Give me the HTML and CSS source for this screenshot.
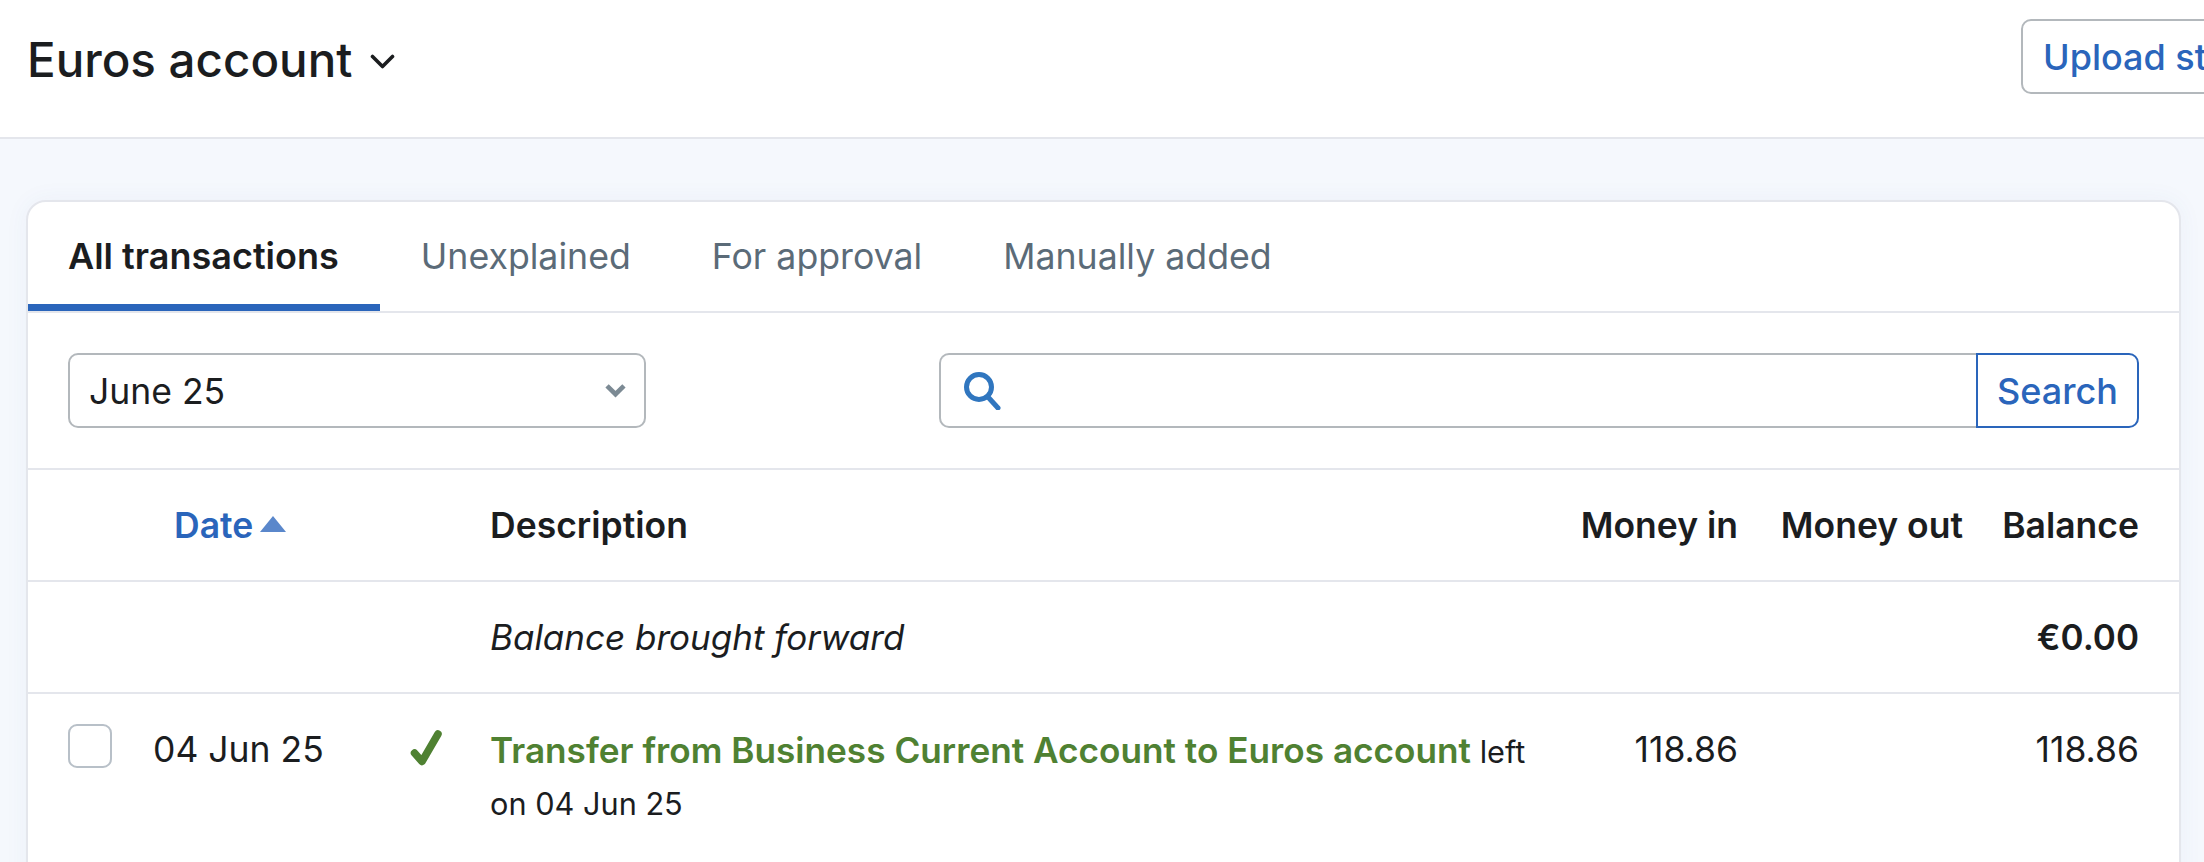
FILE: index.html
```html
<!DOCTYPE html>
<html lang="en">
<head>
<meta charset="utf-8">
<title>Euros account</title>
<link rel="stylesheet" href="styles.css">
</head>
<body>
<header class="topbar">
  <div class="title-wrap">
    <h1 class="title">Euros account</h1>
    <svg class="title-chev" viewBox="0 0 25 15" aria-hidden="true"><path d="M2.5 2.5l10 10 10-10" fill="none" stroke="#1b1d1f" stroke-width="3.6" stroke-linecap="round" stroke-linejoin="round"/></svg>
  </div>
  <a class="upload">Upload statement</a>
</header>
<main class="page">
  <section class="card">
    <nav class="tabs">
      <a class="tab tab-active">All transactions</a>
      <a class="tab">Unexplained</a>
      <a class="tab">For approval</a>
      <a class="tab">Manually added</a>
    </nav>
    <div class="filters">
      <div class="select">
        <span class="select-value">June 25</span>
        <svg class="select-chev" viewBox="0 0 24 16" aria-hidden="true"><path d="M3 3l9 9 9-9" fill="none" stroke="#7c8a94" stroke-width="5"/></svg>
      </div>
      <div class="search">
        <div class="search-input">
          <svg class="search-icon" viewBox="0 0 38 38" aria-hidden="true"><circle cx="15" cy="15" r="12.5" fill="none" stroke="#3076bf" stroke-width="5"/><path d="M24 25l10 11" fill="none" stroke="#3076bf" stroke-width="5" stroke-linecap="round"/></svg>
        </div>
        <div class="search-btn">Search</div>
      </div>
    </div>
    <div class="row head">
      <span></span>
      <span class="date-head">Date<i class="sort-up"></i></span>
      <span></span>
      <span>Description</span>
      <span class="num">Money in</span>
      <span class="num">Money out</span>
      <span class="num">Balance</span>
    </div>
    <div class="row forward">
      <span></span>
      <span></span>
      <span></span>
      <em class="forward-label">Balance brought forward</em>
      <span></span>
      <span></span>
      <strong class="num">€0.00</strong>
    </div>
    <div class="row entry">
      <span class="check"></span>
      <span class="cell">04 Jun 25</span>
      <svg class="tick" viewBox="0 0 32 36" aria-hidden="true"><path d="M4.500 23l7.500 8.500L28 4" fill="none" stroke="#4f8132" stroke-width="7.500" stroke-linecap="round" stroke-linejoin="round"/></svg>
      <div class="desc"><a class="desc-link">Transfer from Business Current Account to Euros account</a> left<br>on 04 Jun 25</div>
      <span class="num cell">118.86</span>
      <span></span>
      <span class="num cell">118.86</span>
    </div>
  </section>
</main>
</body>
</html>
```
FILE: styles.css
```css
* { box-sizing: border-box; }
html, body { margin: 0; height: 862px; overflow: hidden; }
body {
  width: 2204px;
  background: #f5f8fd;
  color: #1b1d1f;
  font-family: "Inter", "Liberation Sans", sans-serif;
  font-size: 36px;
}
.topbar {
  height: 139px;
  background: #fff;
  border-bottom: 2px solid #e4e6ec;
  display: flex;
  padding-left: 27px;
  overflow: hidden;
}
.title-wrap {
  flex: 0 0 1994px;
  display: flex;
  align-items: flex-start;
  gap: 18px;
  padding-top: 36px;
}
.title { margin: 0; font-size: 47.500px; font-weight: 500; line-height: 1; }
.title-chev { width: 25px; height: 15px; margin-top: 18px; }
.upload {
  flex: none;
  margin-top: 19px;
  height: 75px;
  padding: 0 20px;
  display: flex;
  align-items: center;
  border: 2px solid #b3b8bc;
  border-radius: 10px;
  color: #2a65bb;
  font-weight: 500;
  white-space: nowrap;
}
.page { padding: 61px 0 0 26px; }
.card {
  width: 2155px;
  height: 700px;
  background: #fff;
  border: 2px solid #e4e6ec;
  border-radius: 20px;
  box-shadow: 0 0 24px rgba(60, 90, 150, 0.05);
  overflow: hidden;
}
.tabs {
  display: flex;
  height: 111px;
  border-bottom: 2px solid #e4e6ec;
}
.tab {
  display: flex;
  align-items: center;
  padding: 6px 40.500px 0;
  height: 109px;
  color: #5b6b78;
  font-size: 35.700px;
  border-bottom: 7px solid transparent;
}
.tab-active {
  color: #1b1d1f;
  font-size: 36px;
  font-weight: 600;
  padding-left: 40px;
  padding-right: 41.500px;
  border-bottom-color: #2a65bb;
}
.filters {
  height: 157px;
  padding: 40px;
  border-bottom: 2px solid #e4e6ec;
  display: flex;
  justify-content: space-between;
  font-size: 35.500px;
}
.select {
  width: 578px;
  height: 75px;
  padding: 0 17px 0 19px;
  border: 2px solid #b3b8bc;
  border-radius: 10px;
  display: flex;
  align-items: center;
  justify-content: space-between;
}
.select-value { padding-top: 2px; }
.select-chev { width: 23px; height: 15px; }
.search { display: flex; width: 1200px; height: 75px; }
.search-input {
  flex: 1;
  border: 2px solid #b3b8bc;
  border-right: 0;
  border-radius: 10px 0 0 10px;
  display: flex;
  align-items: center;
  padding-left: 23px;
}
.search-icon { width: 38px; height: 38px; margin-top: 1px; }
.search-btn {
  width: 163px;
  border: 2px solid #2a65bb;
  border-radius: 0 10px 10px 0;
  display: flex;
  align-items: center;
  justify-content: center;
  color: #2a65bb;
  font-size: 36px;
  font-weight: 500;
}
.row {
  display: grid;
  grid-template-columns: 86px 257px 80px 1062px 186px 225px 176px;
  padding-left: 39px;
  border-bottom: 2px solid #e4e6ec;
}
.num { text-align: right; }
.head {
  height: 112px;
  align-items: center;
  font-size: 35.500px;
  font-weight: 600;
}
.date-head { color: #2a65bb; white-space: nowrap; padding-left: 21px; display: flex; align-items: center; gap: 7px; }
.sort-up {
  width: 0;
  height: 0;
  margin-top: -2px;
  border-left: 13.500px solid transparent;
  border-right: 13.500px solid transparent;
  border-bottom: 16px solid #5a87cb;
}
.forward { height: 112px; align-items: center; font-size: 35px; }
.forward-label { font-style: italic; }
.forward strong { font-weight: 600; }
.entry { border-bottom: 0; padding-top: 30px; align-items: start; line-height: 44px; font-size: 35.500px; }
.check {
  width: 44px;
  height: 44px;
  margin-left: 1px;
  border: 2px solid #b8c0c8;
  border-radius: 9px;
}
.cell { margin-top: 4px; white-space: nowrap; }
.tick { width: 32px; height: 36px; margin-top: 6px; }
.desc { font-size: 30.700px; line-height: 52px; }
.desc-link { color: #4f8132; font-weight: 600; font-size: 35.200px; }
```
